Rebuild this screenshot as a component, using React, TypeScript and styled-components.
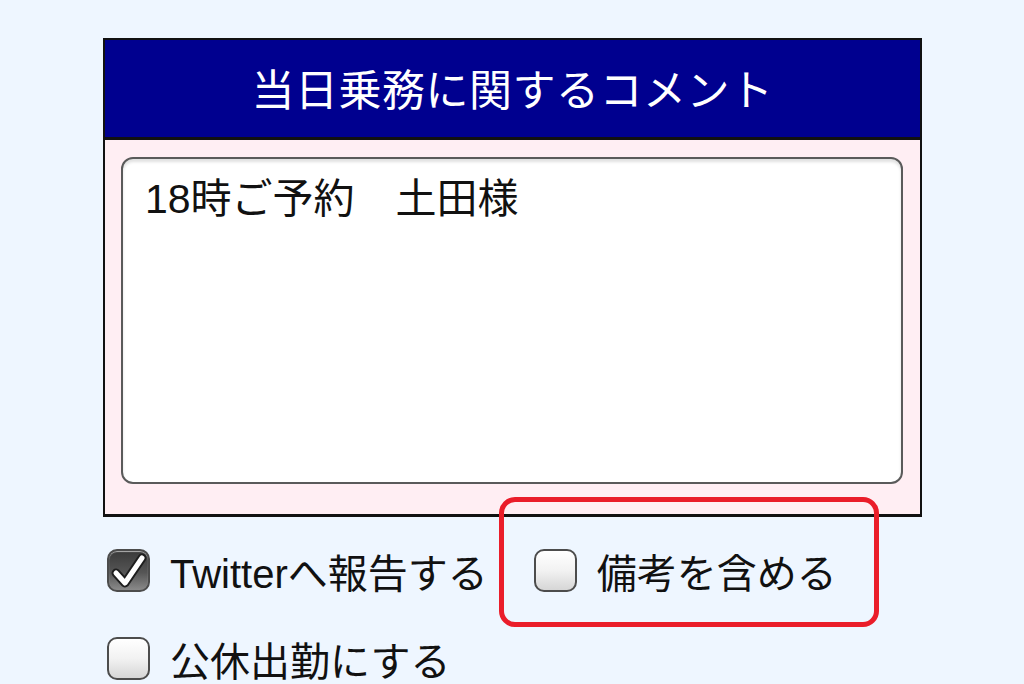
import React, { useState } from 'react';
import styled, { createGlobalStyle } from 'styled-components';

const GlobalStyle = createGlobalStyle`
  html, body {
    margin: 0;
    padding: 0;
    background: #eef6ff;
    font-family: "Liberation Sans", "Noto Sans CJK JP", sans-serif;
  }
`;

const Page = styled.main`
  width: 1024px;
  height: 684px;
  overflow: hidden;
  padding: 38px 0 0 103px;
  box-sizing: border-box;
`;

const Panel = styled.section`
  width: 819px;
  box-sizing: border-box;
  border: 2px solid #111;
  border-bottom-width: 3px;
`;

const Header = styled.h2`
  margin: 0;
  height: 100px;
  padding-bottom: 4px;
  box-sizing: border-box;
  display: flex;
  align-items: center;
  justify-content: center;
  background: #00008f;
  color: #fff;
  font-size: 43px;
  font-weight: 400;
  letter-spacing: 0.5px;
  border-bottom: 3px solid #111;
`;

const Body = styled.div`
  background: #ffeef3;
  padding: 17px 17px 30px 16px;
`;

const Comment = styled.textarea`
  display: block;
  width: 100%;
  height: 327px;
  box-sizing: border-box;
  resize: none;
  border: 2px solid #5a5a5a;
  border-radius: 12px;
  background: #fff;
  box-shadow: inset 0 3px 3px rgba(0, 0, 0, 0.12);
  padding: 14px 22px;
  font-family: inherit;
  font-size: 41px;
  line-height: 52px;
  color: #111;
  outline: none;
`;

const Options = styled.div`
  display: flex;
  flex-direction: column;
  gap: 45px;
  margin-top: 32px;
  padding-left: 4px;
`;

const Row = styled.div`
  display: flex;
  align-items: center;
  gap: 46px;
`;

const Item = styled.label<{ $highlight?: boolean }>`
  position: relative;
  display: flex;
  align-items: center;
  gap: 20px;
  font-size: 40px;
  color: #111;
  cursor: pointer;
  height: 43px;

  ${({ $highlight }) =>
    $highlight &&
    `
    &::after {
      content: '';
      position: absolute;
      left: -35px;
      top: -52px;
      width: 380px;
      height: 130px;
      box-sizing: border-box;
      border: 5px solid #ea1d2a;
      border-radius: 16px;
      pointer-events: none;
    }
  `}
`;

const Box = styled.span<{ $checked: boolean }>`
  flex: none;
  width: 43px;
  height: 43px;
  box-sizing: border-box;
  border: 2px solid #4c4c4c;
  border-radius: 10px;
  display: flex;
  align-items: center;
  justify-content: center;
  overflow: visible;
  background: ${({ $checked }) =>
    $checked
      ? 'linear-gradient(180deg, #3a3a3a 0%, #555 55%, #8a8a8a 100%)'
      : 'linear-gradient(180deg, #ffffff 0%, #f2f2f2 50%, #d6d6d6 100%)'};
  box-shadow: inset 0 1px 1px rgba(255, 255, 255, 0.6);
`;

const Check = () => (
  <svg width="38" height="38" viewBox="0 0 38 38" style={{ flex: 'none' }}>
    <path d="M6 21 L15 31 L32 6" fill="none" stroke="#1e1e1e" strokeWidth="9" strokeLinecap="round" strokeLinejoin="round" />
    <path d="M6 21 L15 31 L32 6" fill="none" stroke="#fff" strokeWidth="5" strokeLinecap="round" strokeLinejoin="round" />
  </svg>
);

type CheckProps = {
  label: string;
  checked: boolean;
  onToggle: () => void;
  highlight?: boolean;
};

const CheckItem = ({ label, checked, onToggle, highlight }: CheckProps) => (
  <Item $highlight={highlight} onClick={onToggle}>
    <Box $checked={checked}>{checked && <Check />}</Box>
    <span>{label}</span>
  </Item>
);

export default function App() {
  const [comment, setComment] = useState('18時ご予約　土田様');
  const [twitter, setTwitter] = useState(true);
  const [remarks, setRemarks] = useState(false);
  const [holiday, setHoliday] = useState(false);

  return (
    <Page>
      <GlobalStyle />
      <Panel>
        <Header>当日乗務に関するコメント</Header>
        <Body>
          <Comment value={comment} onChange={(e) => setComment(e.currentTarget.value)} />
        </Body>
      </Panel>
      <Options>
        <Row>
          <CheckItem label="Twitterへ報告する" checked={twitter} onToggle={() => setTwitter(!twitter)} />
          <CheckItem label="備考を含める" checked={remarks} onToggle={() => setRemarks(!remarks)} highlight />
        </Row>
        <Row>
          <CheckItem label="公休出勤にする" checked={holiday} onToggle={() => setHoliday(!holiday)} />
        </Row>
      </Options>
    </Page>
  );
}
